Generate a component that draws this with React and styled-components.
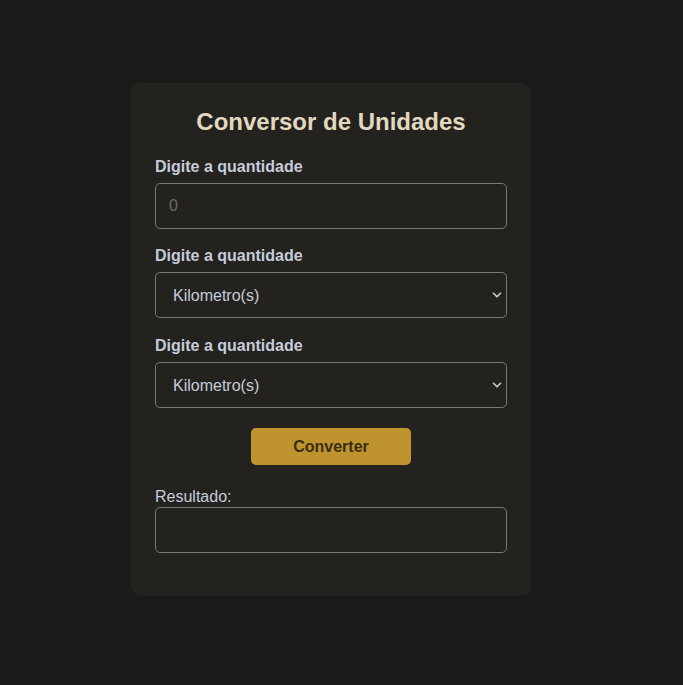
import React from 'react';
import styled, { createGlobalStyle } from 'styled-components';
import { ChevronDown } from 'lucide-react';

const GlobalStyle = createGlobalStyle`
  body {
    margin: 0;
    background: #1b1a18;
    font-family: "Liberation Sans", Arial, sans-serif;
  }
`;

const Page = styled.div`
  min-height: 685px;
  display: flex;
  justify-content: flex-start;
  padding: 83px 0 0 131px;
  box-sizing: border-box;
`;

const Card = styled.div`
  width: 400px;
  height: 513px;
  box-sizing: border-box;
  background: #23221f;
  border-radius: 10px;
  padding: 25px 24px 0;
  display: flex;
  flex-direction: column;
`;

const Title = styled.h2`
  margin: 0 0 22px;
  font-size: 24px;
  line-height: 28px;
  font-weight: bold;
  text-align: center;
  color: #e2d8bf;
`;

const Field = styled.div`
  display: flex;
  flex-direction: column;
  margin-bottom: ${props => props.$gap ?? 18}px;
`;

const Label = styled.label`
  font-size: 16px;
  line-height: 18px;
  font-weight: ${props => (props.$plain ? 'normal' : 'bold')};
  color: #c6ccd9;
  margin-bottom: ${props => (props.$plain ? 1 : 7)}px;
`;

const Input = styled.input`
  box-sizing: border-box;
  height: 46px;
  width: 100%;
  background: #23221f;
  border: 1px solid #7a7874;
  border-radius: 5px;
  padding: 0 13px;
  font-family: inherit;
  font-size: 16px;
  color: #c6ccd9;
  outline: none;
  &::placeholder {
    color: #6b6a66;
  }
`;

const SelectWrap = styled.div`
  position: relative;
`;

const Select = styled.select`
  appearance: none;
  box-sizing: border-box;
  height: 46px;
  width: 100%;
  background: #23221f;
  border: 1px solid #7a7874;
  border-radius: 5px;
  padding: 0 17px;
  font-family: inherit;
  font-size: 16px;
  color: #c6ccd9;
  outline: none;
`;

const Arrow = styled(ChevronDown)`
  position: absolute;
  right: 3px;
  top: 16px;
  pointer-events: none;
  color: #c8c8c8;
`;

const Button = styled.button`
  align-self: center;
  width: 160px;
  height: 37px;
  margin: 1px 0 23px;
  background: #bf942f;
  border: none;
  border-radius: 5px;
  font-family: inherit;
  font-size: 16px;
  font-weight: bold;
  color: #3a2e12;
  cursor: pointer;
`;

const Result = styled.div`
  box-sizing: border-box;
  height: 46px;
  border: 1px solid #7a7874;
  border-radius: 5px;
`;

const units = ['Kilometro(s)', 'Metro(s)', 'Centimetro(s)', 'Milimetro(s)'];

function UnitSelect() {
  return (
    <SelectWrap>
      <Select defaultValue="Kilometro(s)">
        {units.map(u => (
          <option key={u}>{u}</option>
        ))}
      </Select>
      <Arrow size={14} strokeWidth={3} />
    </SelectWrap>
  );
}

export default function App() {
  return (
    <>
      <GlobalStyle />
      <Page>
        <Card>
          <Title>Conversor de Unidades</Title>
          <Field>
            <Label>Digite a quantidade</Label>
            <Input type="number" placeholder="0" />
          </Field>
          <Field $gap={19}>
            <Label>Digite a quantidade</Label>
            <UnitSelect />
          </Field>
          <Field $gap={19}>
            <Label>Digite a quantidade</Label>
            <UnitSelect />
          </Field>
          <Button>Converter</Button>
          <Field $gap={0}>
            <Label $plain>Resultado:</Label>
            <Result />
          </Field>
        </Card>
      </Page>
    </>
  );
}
